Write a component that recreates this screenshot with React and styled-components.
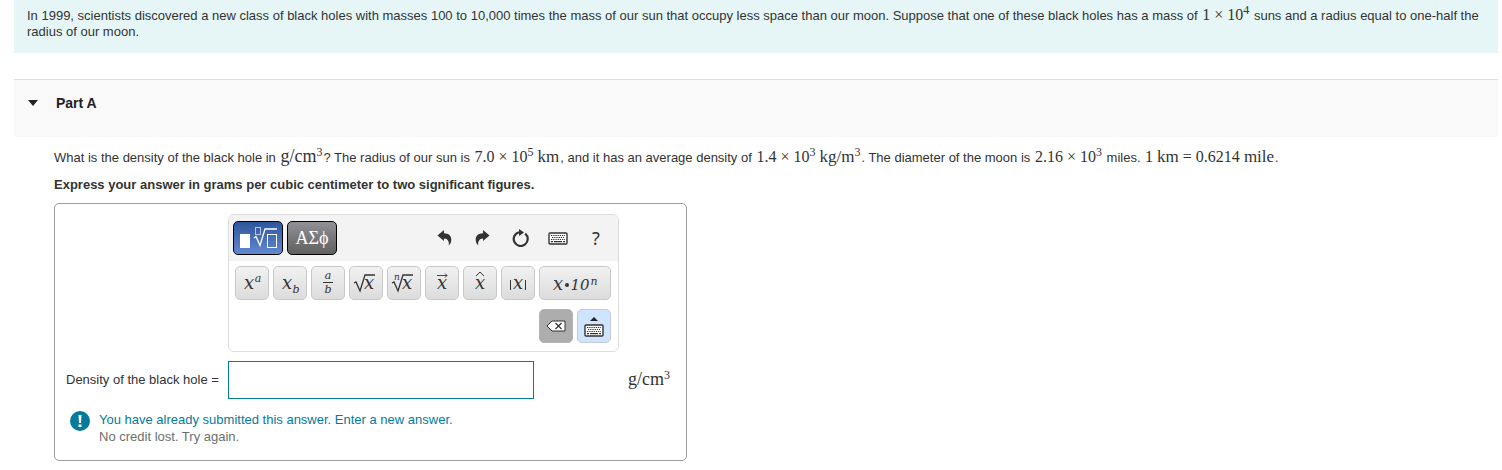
import React from "react";
import styled, { createGlobalStyle, css } from "styled-components";

const GlobalStyle = createGlobalStyle`
  *, *::before, *::after { box-sizing: border-box; }
  body {
    margin: 0;
    background: #fff;
    color: #333;
    font: 13px/16px "Liberation Sans", Arial, sans-serif;
  }
  button, input { font: inherit; color: inherit; }
  p, h2 { margin: 0; }
`;

const Page = styled.main`
  padding: 0 4px 0 14px;
`;

const Intro = styled.p`
  padding: 8px 13px 13px;
  background: #e6f6f7;
`;

const PartHeader = styled.header`
  display: flex;
  align-items: flex-start;
  height: 58px;
  margin-top: 26px;
  padding: 15px 13px;
  border-top: 1px solid #dcdcdc;
  background: #f9f9f9;
`;

const PartTitle = styled.h2`
  font-size: 14px;
  line-height: 16px;
`;

const PartToggle = styled.button`
  display: flex;
  align-items: center;
  gap: 17px;
  padding: 0;
  border: 0;
  background: none;
  color: #222;
  font-weight: bold;
`;

const PartBody = styled.section`
  padding: 12px 0 8px 40px;
`;

const Question = styled.p`
  line-height: 18px;
`;

const Instruction = styled.p`
  margin-top: 10px;
  font-weight: bold;
`;

const MathText = styled.span`
  margin: 0 1px;
  font-family: "Liberation Serif", "Times New Roman", serif;
  font-size: ${(p) => (p.$large ? 18 : 16)}px;
  line-height: 14px;
  white-space: nowrap;

  sup {
    font-size: 12px;
    line-height: 0;
    vertical-align: 6px;
  }
`;

const UnitName = styled.span`
  font-size: 17px;
`;

const AnswerBox = styled.form`
  width: 100%;
  max-width: 633px;
  margin-top: 10px;
  padding: 10px 11px 15px;
  border: 1px solid #a0a0a0;
  border-radius: 5px;
`;

const AnswerGrid = styled.div`
  display: grid;
  grid-template-columns: 162px 391px 1fr;
  row-gap: 9px;
  align-items: center;
`;

const Palette = styled.div`
  grid-column: 2 / -1;
  width: 391px;
  height: 138px;
  border: 1px solid #ddd;
  border-radius: 6px;
  overflow: hidden;
`;

const PaletteHeader = styled.div`
  display: flex;
  align-items: center;
  gap: 4px;
  height: 46px;
  padding: 0 3px 0 4px;
  background: #f3f3f3;
`;

const TabButton = styled.button`
  display: flex;
  align-items: center;
  justify-content: center;
  width: 50px;
  height: 34px;
  padding: 0;
  border: 1px solid #000;
  border-radius: 5px;
  color: #fff;
  font: 18px/20px "Liberation Serif", serif;
  background: ${(p) =>
    p.$active
      ? "linear-gradient(#2f569c, #6289cf)"
      : "linear-gradient(#909097, #606060)"};
`;

const Tools = styled.div`
  display: flex;
  margin-left: auto;
`;

const ToolButton = styled.button`
  display: flex;
  align-items: center;
  justify-content: center;
  width: 38px;
  height: 34px;
  padding: 0;
  border: 0;
  background: none;
  font: 18px/20px "Noto Sans", sans-serif;
`;

const Keys = styled.div`
  display: flex;
  flex-wrap: wrap;
  justify-content: flex-end;
  gap: 9px 4px;
  padding: 5px 7px 8px 6px;
`;

const keyTones = {
  plain: css`
    border-color: #c8c8c8;
    background: linear-gradient(#f1f1f1, #dcdcdc);
  `,
  dark: css`
    border-color: #b5b5b5;
    background: #adadad;
  `,
  blue: css`
    border-color: #c3cbd4;
    background: #cfe5ff;
  `,
};

const Key = styled.button`
  display: flex;
  align-items: center;
  justify-content: center;
  width: ${(p) => (p.$wide ? 72 : 34)}px;
  height: 34px;
  padding: 0;
  border: 1px solid;
  border-radius: 5px;
  ${(p) => keyTones[p.$tone || "plain"]}
`;

const AnswerLabel = styled.label`
  white-space: nowrap;
`;

const AnswerInput = styled.input`
  width: 306px;
  height: 38px;
  padding: 0 8px;
  border: 1px solid #047a9c;
  border-radius: 0;
  background: #fff;
  outline: 0;
`;

const Unit = styled.span`
  padding-left: 8px;
`;

const Feedback = styled.div`
  display: flex;
  gap: 9px;
  margin: 12px 0 0 4px;
  line-height: 17px;
`;

const FeedbackTitle = styled.p`
  color: #047a9c;
`;

const FeedbackDetail = styled.p`
  color: #6a7070;
`;

const Glyph = styled.text`
  font-family: "DejaVu Serif", serif;
  font-style: italic;
  font-size: ${(p) => p.$size || 18}px;
  fill: #333;
  text-anchor: middle;
`;

const KeyArt = ({ children, width = 32 }) => (
  <svg width={width} height="32" viewBox={`0 0 ${width} 32`} fill="none" stroke="none" aria-hidden="true">
    {children}
  </svg>
);

const Line = (props) => <path fill="none" stroke="#333" {...props} />;

const KeyboardIcon = () => (
  <svg width="20" height="13" viewBox="0 0 20 13" aria-hidden="true">
    <rect x="1" y="1" width="18" height="11" rx="1" fill="#fff" stroke="#333" strokeWidth="1.4" />
    <path d="M3 3.5h14M4 5.5h12M3 7.5h14" stroke="#333" strokeWidth="1.1" strokeDasharray="1.3 .9" />
    <path d="M3 9.6h2M6 9.6h8M15 9.6h2" stroke="#333" strokeWidth="1.2" />
  </svg>
);

const HistoryIcon = ({ redo }) => (
  <svg width="15" height="16" viewBox="0 0 15 16" aria-hidden="true">
    <path
      transform={redo ? "translate(15 0) scale(-1 1)" : undefined}
      fill="#333"
      d="M.5 5.5 7 0v3.2c4.800.1 7.300 2.600 7.300 6.400 0 2.500-.8 4.500-2.700 6 .5-1.900.4-3.400-.4-4.700C10.300 9.200 9 8.600 7 8.500V11Z"
    />
  </svg>
);

const ResetIcon = () => (
  <svg width="17" height="18" viewBox="0 0 17 18" aria-hidden="true">
    <path d="M13.200 4.600A7 7 0 1 1 7 3.200" fill="none" stroke="#333" strokeWidth="2.200" />
    <path d="M7 0v7l5-3.500Z" fill="#333" />
  </svg>
);

const TemplateIcon = () => (
  <svg width="40" height="24" viewBox="0 0 40 24" fill="none" stroke="#fff" aria-hidden="true">
    <rect x="2" y="8" width="10" height="14" fill="#fff" stroke="none" />
    <rect x="17.500" y="1.500" width="5" height="7" stroke="#b5c5e3" />
    <path d="m16 12 2-1.500 4 9 5-16.500h12" strokeWidth="1.300" />
    <rect x="29.500" y="8.500" width="9" height="13" />
  </svg>
);

const mathKeys = [
  {
    name: "Superscript",
    art: <><Glyph x="13" y="22">x</Glyph><Glyph x="22" y="15" $size={11}>a</Glyph></>,
  },
  {
    name: "Subscript",
    art: <><Glyph x="13" y="22">x</Glyph><Glyph x="22" y="26" $size={11}>b</Glyph></>,
  },
  {
    name: "Fraction",
    art: <><Glyph x="16" y="12" $size={11}>a</Glyph><Line d="M11 15.500h10" /><Glyph x="16" y="26" $size={11}>b</Glyph></>,
  },
  {
    name: "Square root",
    art: <><Line d="m4 16 2-1 4 9 5-16h10" strokeWidth="1.300" /><Glyph x="19" y="22">x</Glyph></>,
  },
  {
    name: "Nth root",
    art: <><Glyph x="9" y="13" $size={9}>n</Glyph><Line d="m4 16 2-1 4 9 5-16h10" strokeWidth="1.300" /><Glyph x="19" y="22">x</Glyph></>,
  },
  {
    name: "Vector",
    art: <><Line d="M11 8.500h10m-2-2 2 2-2 2" strokeWidth=".9" /><Glyph x="16" y="22">x</Glyph></>,
  },
  {
    name: "Unit vector",
    art: <><Line d="m12 9 4-4 4 4" /><Glyph x="16" y="22">x</Glyph></>,
  },
  {
    name: "Absolute value",
    art: <><Line d="M8.500 13v10M23.500 13v10" /><Glyph x="16" y="22">x</Glyph></>,
  },
];

const Sci = ({ value, power, children }) => (
  <MathText>{value} × 10<sup>{power}</sup>{children}</MathText>
);

const GramsPerCubicCm = () => (
  <MathText $large>g/cm<sup>3</sup></MathText>
);

export default function App() {
  return (
    <>
      <GlobalStyle />
      <Page>
        <Intro>
          In 1999, scientists discovered a new class of black holes with masses 100 to 10,000 times the mass
          of our sun that occupy less space than our moon. Suppose that one of these black holes has a mass
          of <Sci value="1" power="4" /> suns and a radius equal to one-half the radius of our moon.
        </Intro>

        <PartHeader>
          <PartTitle>
            <PartToggle type="button" aria-expanded="true">
              <svg width="12" height="6" viewBox="0 0 12 6" aria-hidden="true">
                <path d="M1 0h10L6 6Z" fill="#222" />
              </svg>
              Part A
            </PartToggle>
          </PartTitle>
        </PartHeader>

        <PartBody>
          <Question>
            What is the density of the black hole in <GramsPerCubicCm />? The radius of our sun
            is <Sci value="7.0" power="5"> <UnitName>km</UnitName></Sci>, and it has an average density
            of <Sci value="1.4" power="3"> <UnitName>kg/m<sup>3</sup></UnitName></Sci>. The diameter of the moon
            is <Sci value="2.16" power="3" /> miles. <MathText>1 <UnitName>km</UnitName> = 0.6214 <UnitName>mile</UnitName></MathText>.
          </Question>
          <Instruction>Express your answer in grams per cubic centimeter to two significant figures.</Instruction>

          <AnswerBox onSubmit={(e) => e.preventDefault()}>
            <AnswerGrid>
              <Palette>
                <PaletteHeader>
                  <TabButton type="button" $active aria-label="Templates"><TemplateIcon /></TabButton>
                  <TabButton type="button">ΑΣϕ</TabButton>
                  <Tools>
                    <ToolButton type="button" aria-label="Undo"><HistoryIcon /></ToolButton>
                    <ToolButton type="button" aria-label="Redo"><HistoryIcon redo /></ToolButton>
                    <ToolButton type="button" aria-label="Reset"><ResetIcon /></ToolButton>
                    <ToolButton type="button" aria-label="Keyboard shortcuts"><KeyboardIcon /></ToolButton>
                    <ToolButton type="button">?</ToolButton>
                  </Tools>
                </PaletteHeader>
                <Keys>
                  {mathKeys.map((key) => (
                    <Key key={key.name} type="button" aria-label={key.name}>
                      <KeyArt>{key.art}</KeyArt>
                    </Key>
                  ))}
                  <Key type="button" $wide aria-label="Scientific notation">
                    <KeyArt width={70}>
                      <Glyph x="18" y="23">x</Glyph>
                      <circle cx="27" cy="18" r="2" fill="#333" />
                      <Glyph x="40" y="23" $size={15}>10</Glyph>
                      <Glyph x="54" y="18" $size={11}>n</Glyph>
                    </KeyArt>
                  </Key>
                  <Key type="button" $tone="dark" aria-label="Delete">
                    <svg width="20" height="12" viewBox="0 0 20 12" aria-hidden="true">
                      <path d="M1 6 6 1h13v10H6Z" fill="#fff" stroke="#333" />
                      <path d="m9.500 3 6 6m0-6-6 6" stroke="#333" strokeWidth="1.200" />
                    </svg>
                  </Key>
                  <Key type="button" $tone="blue" aria-label="Hide keyboard">
                    <svg width="20" height="22" viewBox="0 0 20 22" aria-hidden="true">
                      <path d="m6 6 4-4 4 4Z" fill="#222" />
                      <g transform="translate(0 9)"><KeyboardIcon /></g>
                    </svg>
                  </Key>
                </Keys>
              </Palette>

              <AnswerLabel htmlFor="density">Density of the black hole =</AnswerLabel>
              <AnswerInput id="density" type="text" autoComplete="off" />
              <Unit><GramsPerCubicCm /></Unit>
            </AnswerGrid>

            <Feedback>
              <svg width="20" height="20" viewBox="0 0 20 20" role="img" aria-label="Notice">
                <circle cx="10" cy="10" r="10" fill="#047a9c" />
                <path d="M8.500 4h3l-.5 8H9ZM8.500 13.500h3v2.500h-3Z" fill="#fff" />
              </svg>
              <div>
                <FeedbackTitle>You have already submitted this answer. Enter a new answer.</FeedbackTitle>
                <FeedbackDetail>No credit lost. Try again.</FeedbackDetail>
              </div>
            </Feedback>
          </AnswerBox>
        </PartBody>
      </Page>
    </>
  );
}
